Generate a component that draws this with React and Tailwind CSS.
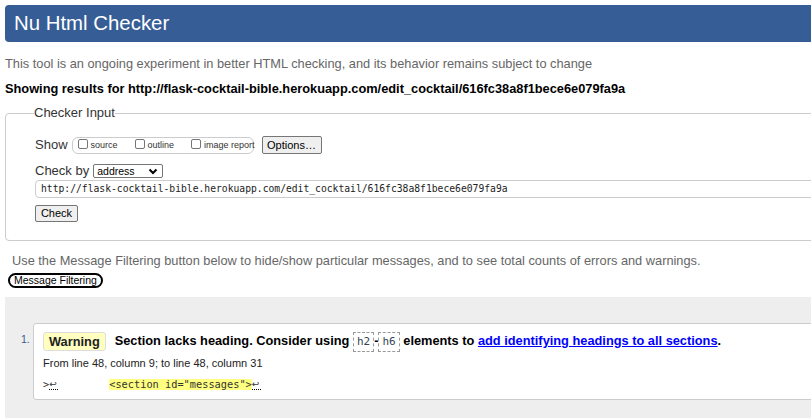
import React from "react";

function Checkbox({ label }) {
  return (
    <label className="flex items-center gap-[3px] text-[9px] leading-[11px] text-[#333] whitespace-nowrap">
      <span className="w-[10px] h-[10px] -mt-[2px] border border-[#767676] rounded-[2px] bg-white inline-block" />
      <span>{label}</span>
    </label>
  );
}

function Code({ children }) {
  return (
    <code className="inline-block border border-dashed border-[#999] px-[3px] font-['DejaVu_Sans_Mono',monospace] font-normal text-[11px] leading-[18px] text-[#345] align-middle">
      {children}
    </code>
  );
}

function Arrow() {
  return (
    <span className="inline-block w-[9px] border-b border-dotted border-black text-[9px] leading-[10px] font-['DejaVu_Sans',sans-serif]">↩</span>
  );
}

export default function App() {
  const url = "http://flask-cocktail-bible.herokuapp.com/edit_cocktail/616fc38a8f1bece6e079fa9a";

  return (
    <div className="w-[811px] h-[419px] overflow-hidden bg-white font-['Liberation_Sans',Arial,sans-serif] text-black">
      <div className="w-[1000px] pl-[5px] pt-[5px]">
        {/* header */}
        <h1 className="h-[37px] bg-[#365d95] rounded-[4px] text-white text-[20.4px] leading-[37px] pl-[9px]">
          Nu Html Checker
        </h1>

        <p className="mt-[14px] text-[12.8px] leading-[16px] text-[#666]">
          This tool is an ongoing experiment in better HTML checking, and its behavior remains subject to change
        </p>
        <p className="mt-[9px] text-[12.8px] leading-[16px] font-bold">
          Showing results for {url}
        </p>

        {/* checker input */}
        <fieldset className="mt-[8px] border border-[#ccc] rounded-[4px] pl-[29px] pb-[16px]">
          <legend className="text-[13px] leading-[16px] text-[#333] -ml-[1px]">Checker Input</legend>

          <div className="mt-[14px] flex items-center h-[20px]">
            <span className="text-[13px] text-[#333]">Show</span>
            <div className="ml-[4px] h-[17px] w-[182px] border border-[#ccc] rounded-[6px] flex items-center pl-[5px] gap-[17px]">
              <Checkbox label="source" />
              <Checkbox label="outline" />
              <Checkbox label="image report" />
            </div>
            <button className="ml-[8px] w-[60px] h-[18px] border border-[#767676] rounded-[2px] bg-[#efefef] text-[11px] leading-[16px] text-black">
              Options…
            </button>
          </div>

          <div className="mt-[9px] flex items-center h-[14px]">
            <span className="text-[13px] text-[#333]">Check by</span>
            <div className="ml-[4px] w-[70px] h-[14px] border border-[#767676] rounded-[2px] flex items-center justify-between pl-[3px] pr-[4px] text-[10.5px] leading-[12px]">
              <span>address</span>
              <svg width="10" height="7" viewBox="0 0 10 7">
                <path d="M1.5 1.5 L5 5 L8.5 1.5" fill="none" stroke="#000" strokeWidth="2" />
              </svg>
            </div>
          </div>

          <div className="mt-[2px] h-[18px] border border-[#ccc] rounded-l-[4px] flex items-center pl-[5px] font-['DejaVu_Sans_Mono',monospace] text-[9.7px] text-[#222]">
            {url}
          </div>

          <button className="mt-[7px] w-[43px] h-[17px] border border-[#767676] rounded-[2px] bg-[#efefef] text-[11px] leading-[15px] text-black">
            Check
          </button>
        </fieldset>

        {/* filtering */}
        <p className="mt-[12px] pl-[7px] text-[12.8px] leading-[16px] text-[#666]">
          Use the Message Filtering button below to hide/show particular messages, and to see total counts of errors and warnings.
        </p>
        <button className="block mt-[4px] ml-[3px] h-[15px] px-[4px] border-2 border-black rounded-full bg-white text-[10.5px] leading-[11px]">
          Message Filtering
        </button>

        {/* results */}
        <div className="mt-[9px] bg-[#eee] pt-[26px] pb-[18px] pl-[28px]">
          <div className="flex">
            <span className="w-0 -ml-[12px] pt-[10px] text-[10.5px] leading-[12px] text-[#365d95] whitespace-nowrap">1.</span>
            <div className="ml-[12px] flex-1 bg-white border border-[#ccc] rounded-[3px] pl-[9px] pt-[7px] pb-[9px]">
              <div className="flex items-center text-[12.8px] font-bold leading-[19px]">
                <span className="px-[5px] h-[19px] leading-[17px] bg-[#ffffc0] border border-[#ddd] rounded-[3px] text-[#222]">
                  Warning
                </span>
                <span className="ml-[9px]">
                  Section lacks heading. Consider using <Code>h2</Code>-<Code>h6</Code> elements to{" "}
                  <a href="#" className="text-[#00f] underline">add identifying headings to all sections</a>.
                </span>
              </div>
              <p className="mt-[4px] text-[11px] leading-[14px] text-[#222]">
                From line 48, column 9; to line 48, column 31
              </p>
              <div className="mt-[9px] flex items-center font-['DejaVu_Sans_Mono',monospace] text-[10.3px] leading-[11px] text-[#333]">
                <span>&gt;</span>
                <Arrow />
                <span className="w-[51px]" />
                <span className="bg-[#ffff80]">&lt;section id="messages"&gt;</span>
                <Arrow />
              </div>
            </div>
          </div>
        </div>
      </div>
    </div>
  );
}
